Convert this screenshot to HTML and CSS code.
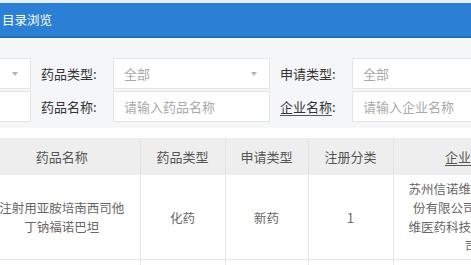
FILE: index.html
```html
<!DOCTYPE html>
<html lang="zh-CN">
  <head>
    <meta charset="UTF-8" />
    <meta name="viewport" content="width=device-width, initial-scale=1.0" />
    <title>目录浏览</title>
    <link rel="stylesheet" href="styles.css">
  </head>
  <body>
    <div class="top-strip"></div>
    <div class="title-bar">目录浏览</div>

    <div class="search">
      <div class="search-row">
        <div class="field select"><span class="value"></span><span class="arrow"></span></div>
        <div class="label">药品类型:</div>
        <div class="field select"><span class="value">全部</span><span class="arrow"></span></div>
        <div class="label">申请类型:</div>
        <div class="field select"><span class="value">全部</span><span class="arrow"></span></div>
      </div>
      <div class="search-row">
        <div class="field"><span class="value"></span></div>
        <div class="label">药品名称:</div>
        <div class="field"><span class="value">请输入药品名称</span></div>
        <div class="label"><span class="mark">企业名称</span>:</div>
        <div class="field"><span class="value">请输入企业名称</span></div>
      </div>
    </div>

    <div class="table-wrap">
      <table class="list">
        <colgroup>
          <col class="col-wide" />
          <col class="col-mid" />
          <col class="col-mid" />
          <col class="col-mid" />
          <col class="col-wide" />
        </colgroup>
        <thead>
          <tr>
            <th>药品名称</th>
            <th>药品类型</th>
            <th>申请类型</th>
            <th>注册分类</th>
            <th><span class="mark">企业</span>名称</th>
          </tr>
        </thead>
        <tbody>
          <tr>
            <td>注射用亚胺培南西司他丁钠福诺巴坦</td>
            <td>化药</td>
            <td>新药</td>
            <td>1</td>
            <td>苏州信诺维医药科技股份有限公司,苏州信诺维医药科技股份有限公司</td>
          </tr>
          <tr class="next-row">
            <td>注射用亚胺培南西司他丁钠</td>
            <td>化药</td>
            <td>仿制</td>
            <td>4</td>
            <td>苏州信诺维医药科技股份有限公司</td>
          </tr>
        </tbody>
      </table>
    </div>
  </body>
</html>
```

FILE: styles.css
```css
* {
  margin: 0;
  padding: 0;
  box-sizing: border-box;
}

body {
  background: #ffffff;
  font-family: "Noto Sans CJK SC", "Noto Sans", sans-serif;
  overflow: hidden;
  width: 471px;
  height: 265px;
}

.top-strip {
  height: 3px;
  background: #e6f0fa;
}

.title-bar {
  height: 35px;
  padding-left: 2px;
  background: #2b80d5;
  border-bottom: 2px solid #1f6dbf;
  color: #ffffff;
  font-size: 12.5px;
  line-height: 33px;
}

/* search panel */
.search {
  background: #f5f6f8;
  padding: 20px 0 6px;
  display: flex;
  flex-direction: column;
  gap: 2px;
}

.search-row {
  display: flex;
  margin-left: -126px;
}

.field {
  flex: 0 0 157px;
  height: 31px;
  background: #ffffff;
  border: 1px solid #e4e5e7;
  display: flex;
  align-items: center;
  justify-content: space-between;
  padding: 0 10px;
}

.field .value {
  color: #a9a9a9;
  font-size: 13px;
}

.arrow {
  width: 0;
  height: 0;
  border-left: 3.5px solid transparent;
  border-right: 3.5px solid transparent;
  border-top: 4px solid #b5b5b5;
  margin-right: 2px;
}

.label {
  flex: 0 0 82px;
  padding-left: 10px;
  display: flex;
  align-items: center;
  color: #333333;
  font-size: 13px;
}

.mark {
  text-decoration: underline;
  text-decoration-color: #555555;
  text-underline-offset: 3px;
}

/* result table */
.table-wrap {
  margin-top: 10px;
}

.list {
  margin-left: -16px;
  border-collapse: collapse;
  table-layout: fixed;
  width: 565px;
}

.col-wide {
  width: 156px;
}

.col-mid:nth-child(2) {
  width: 85px;
}

.col-mid:nth-child(3) {
  width: 83px;
}

.col-mid:nth-child(4) {
  width: 85px;
}

.list th {
  height: 37px;
  background: #eeeeee;
  color: #555555;
  font-size: 13px;
  font-weight: normal;
  border-right: 1px solid #e2e2e2;
  text-align: center;
}

.list td {
  padding: 4px 15px;
  color: #666666;
  font-size: 12.5px;
  line-height: 19px;
  text-align: center;
  border-right: 1px solid #e6e6e6;
  border-bottom: 1px solid #e6e6e6;
  word-break: break-all;
}

.list .next-row td {
  padding-top: 14px;
  padding-bottom: 14px;
}
```
